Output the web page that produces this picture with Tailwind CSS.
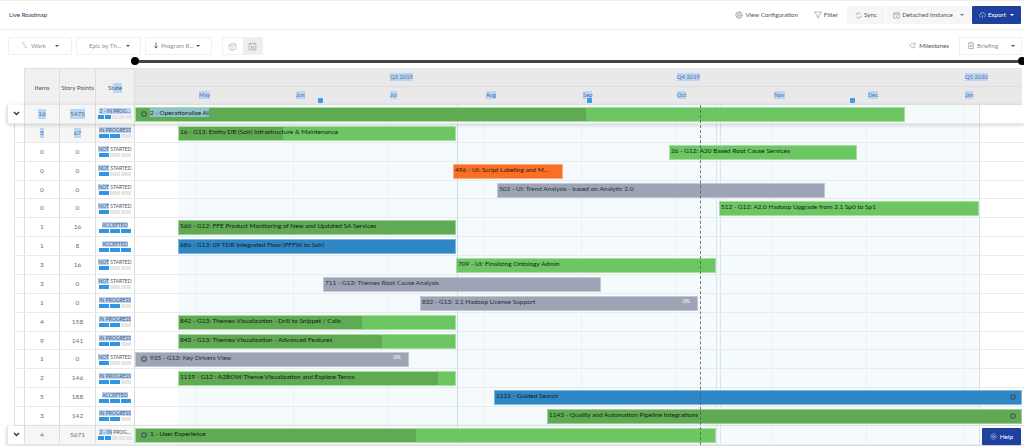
<!DOCTYPE html>
<html lang="en">
<head>
    <meta charset="UTF-8">
    <title>Live Roadmap</title>
    <script src="https://cdn.jsdelivr.net/npm/@tailwindcss/browser@4"></script>
</head>
<body class="bg-white font-[Lato,sans-serif] text-[#4a5568]">
<div class="relative h-[446px] w-[1024px] overflow-hidden">
    <!-- top bar -->
    <header class="flex h-[30px] items-center justify-between border-t border-b border-[#eeeeee] pl-[9px] pr-[3px]">
        <h1 class="text-[6.200px] font-medium text-[#3d4a63]">Live Roadmap</h1>
        <div class="flex items-center whitespace-nowrap text-[6.200px] text-[#4a5568]">
            <span class="mr-[16px] flex items-center gap-[2px]">
                <svg class="h-[8px] w-[8px] text-[#8a8f98]" viewBox="0 0 16 16" fill="none" stroke="currentColor" stroke-width="1.6"><circle cx="8" cy="8" r="2.5"/><circle cx="8" cy="8" r="6" stroke-dasharray="2.2 1.2" stroke-width="2.6"/></svg>
                View Configuration
            </span>
            <span class="mr-[9px] flex items-center gap-[2px]">
                <svg class="h-[8px] w-[8px] text-[#8a8f98]" viewBox="0 0 16 16" fill="none" stroke="currentColor" stroke-width="1.2"><path d="M1 2h14L10 8.5V14l-4-2V8.5z"/></svg>
                Filter
            </span>
            <span class="flex h-[18px] w-[38px] items-center justify-center gap-[2px] rounded-[1px] bg-[#f6f6f6]">
                <svg class="h-[7px] w-[7px] text-[#8a8f98]" viewBox="0 0 16 16" fill="none" stroke="currentColor" stroke-width="1.6"><path d="M2 7a6 6 0 0 1 11-2M14 9a6 6 0 0 1-11 2"/></svg>
                Sync
            </span>
            <span class="ml-px flex h-[18px] w-[85px] items-center justify-center gap-[2px] rounded-[1px] bg-[#f6f6f6]">
                <svg class="h-[7px] w-[7px] text-[#8a8f98]" viewBox="0 0 16 16" fill="none" stroke="currentColor" stroke-width="1.4"><rect x="2" y="2" width="12" height="12"/><path d="M2 5h12M8 8v4"/></svg>
                Detached Instance
                <span class="ml-[5px] h-0 w-0 border-x-[2px] border-t-[2px] border-x-transparent border-t-[#777777]"></span>
            </span>
            <span class="ml-px flex h-[18px] w-[49px] items-center justify-center gap-[2px] rounded-[1px] bg-[#1e419f] text-white">
                <svg class="h-[7px] w-[7px] text-[#b8c6ea]" viewBox="0 0 16 16" fill="none" stroke="currentColor" stroke-width="1.5"><path d="M4 11a3 3 0 0 1 0-6 4 4 0 0 1 8 0 3 3 0 0 1 0 6M8 7v7"/></svg>
                Export
                <span class="ml-[2px] h-0 w-0 border-x-[2px] border-t-[2px] border-x-transparent border-t-white"></span>
            </span>
        </div>
    </header>

    <!-- toolbar -->
    <div class="flex h-[26px] items-center justify-between whitespace-nowrap pl-[8px] pr-[2px] pt-[6px] text-[6.200px] text-[#8b8f96]">
        <div class="flex items-center">
            <span class="flex h-[18px] w-[64px] items-center justify-between border border-[#f0f0f0] pl-[12px] pr-[12px]">
                <span class="flex items-center gap-[3px]">
                    <svg class="h-[7px] w-[7px] text-[#999999]" viewBox="0 0 16 16" fill="none" stroke="currentColor" stroke-width="1.4"><path d="M2 2h6M5 7h6M8 12h6"/></svg>
                    Work
                </span>
                <span class="h-0 w-0 border-x-[2px] border-t-[2px] border-x-transparent border-t-[#555555]"></span>
            </span>
            <span class="ml-[4px] flex h-[18px] w-[65px] items-center justify-between border border-[#f0f0f0] pl-[12px] pr-[10px]">
                Epic by Th...
                <span class="h-0 w-0 border-x-[2px] border-t-[2px] border-x-transparent border-t-[#555555]"></span>
            </span>
            <span class="ml-[4px] flex h-[18px] w-[67px] items-center justify-between border border-[#f0f0f0] pl-[8px] pr-[11px]">
                <span class="flex items-center gap-[3px]">
                    <svg class="h-[7px] w-[4px] text-[#444444]" viewBox="0 0 8 16" fill="none" stroke="currentColor" stroke-width="1.8"><path d="M4 1v12M1 10l3 4 3-4"/></svg>
                    Program R...
                </span>
                <span class="h-0 w-0 border-x-[2px] border-t-[2px] border-x-transparent border-t-[#555555]"></span>
            </span>
            <span class="ml-[10px] flex h-[18px] w-[41px] border border-[#f0f0f0]">
                <span class="flex w-1/2 items-center justify-center">
                    <svg class="h-[9px] w-[9px] text-[#b5b5b5]" viewBox="0 0 16 16" fill="none" stroke="currentColor" stroke-width="1.3"><path d="M2 5l7-3 5 2v8l-7 3-5-3zM2 5l5 2.500 7-3.500M7 7.500V15"/></svg>
                </span>
                <span class="flex w-1/2 items-center justify-center bg-[#eeeeee]">
                    <svg class="h-[9px] w-[9px] text-[#a8a8a8]" viewBox="0 0 16 16" fill="none" stroke="currentColor" stroke-width="1.3"><rect x="2" y="3" width="12" height="11"/><path d="M5 1v4M11 1v4M6 8h4v3H6z"/></svg>
                </span>
            </span>
        </div>
        <div class="flex items-center">
            <span class="mr-[10px] flex items-center gap-[3px] text-[#4a5568]">
                <svg class="h-[7px] w-[7px] text-[#9aa0a8]" viewBox="0 0 16 16" fill="none" stroke="currentColor" stroke-width="1.5"><path d="M1 8l6-5h8l-4 5 2 5H7z"/></svg>
                Milestones
            </span>
            <span class="flex h-[18px] w-[63px] items-center justify-between border border-[#f0f0f0] pl-[8px] pr-[6px]">
                <span class="flex items-center gap-[3px]">
                    <svg class="h-[7px] w-[6px] text-[#999999]" viewBox="0 0 12 16" fill="none" stroke="currentColor" stroke-width="1.6"><rect x="1" y="2" width="10" height="13"/><path d="M4 1h4M3 7h6M3 10h6"/></svg>
                    Briefing
                </span>
                <span class="h-0 w-0 border-x-[2px] border-t-[2px] border-x-transparent border-t-[#555555]"></span>
            </span>
        </div>
    </div>

    <!-- date range slider -->
    <div class="mb-[2px] ml-[131px] flex h-[10px] w-[895px] items-center">
        <span class="h-[8px] w-[8px] shrink-0 rounded-full bg-black"></span>
        <span class="h-[3px] flex-1 bg-[#444444]"></span>
        <span class="h-[8px] w-[8px] shrink-0 rounded-full bg-black"></span>
    </div>

    <!-- column and calendar headers -->
    <div class="ml-[24px] flex h-[37px] whitespace-nowrap text-[6.200px] text-[#4a5568]">
        <div class="flex w-[36px] items-center justify-center border-x border-t border-[#dddddd] bg-[#f0f0f0] pt-[2px]">Items</div>
        <div class="flex w-[36px] items-center justify-center border-r border-t border-[#dddddd] bg-[#f0f0f0] pt-[2px]">Story Points</div>
        <div class="flex w-[39px] items-center justify-center border-r border-t border-[#dddddd] bg-[#f0f0f0] pt-[2px]">St<span class="bg-[#b9d6f8]">ate</span></div>
        <div id="calendar" class="relative w-[887px] bg-[#e9e9e9]">
            <div class="h-[19px] border-b border-[#dddddd]"></div>
        </div>
    </div>

    <!-- rows -->
    <div class="relative">
        <div class="absolute left-[178px] top-0 h-[360px] w-[801px] bg-[#f5fafd]"></div>
        <div id="gridlines" class="absolute inset-0"></div>
        <div id="rows" class="relative"></div>
        <span class="absolute inset-y-0 left-[700px] border-l border-dashed border-[#555b60]/80"></span>
    </div>

    <button class="absolute left-[982px] top-[428px] flex h-[17px] w-[39px] items-center justify-center gap-[3px] rounded-[1px] bg-[#1e419f] text-[6.500px] text-white shadow">
        <svg class="h-[7px] w-[7px] text-[#b8c6ea]" viewBox="0 0 16 16" fill="none" stroke="currentColor" stroke-width="2"><circle cx="8" cy="8" r="6" stroke-dasharray="3 1.500"/><circle cx="8" cy="8" r="2"/></svg>
        Help
    </button>
</div>

<script>
    const months = [['May', 199], ['Jun', 296], ['Jul', 390], ['Aug', 486], ['Sep', 583], ['Oct', 677], ['Nov', 774], ['Dec', 868], ['Jan', 965]];
    const quarters = [['Q3 2019', 390], ['Q4 2019', 677], ['Q1 2020', 965]];
    const milestones = [320, 589, 852];

    const barColors = {
        green: 'bg-[#6cc661]',
        dark: 'bg-[#5faa52]',
        orange: 'bg-[#fb6f24]',
        gray: 'bg-[#9ca4b5]',
        blue: 'bg-[#2f86c5]'
    };

    const stateBars = { 'NOT STARTED': 1, 'IN PROGRESS': 2, 'ACCEPTED': 3 };

    const rows = [
        { items: 16, points: 5475, state: '2 - IN PROG...', group: true, selected: true, from: 135, to: 905, done: 585, color: 'green', title: '2 - Operationalize AI', icon: 'left' },
        { items: 5, points: 67, state: 'IN PROGRESS', selected: true, from: 178, to: 456, done: 282, color: 'green', title: '16 - G13: Entity DB (Solr) Infrastructure & Maintenance' },
        { items: 0, points: 0, state: 'NOT STARTED', from: 669, to: 857, color: 'green', title: '26 - G12: A20 Based Root Cause Services' },
        { items: 0, points: 0, state: 'NOT STARTED', from: 453, to: 563, color: 'orange', title: '496 - UI: Script Labeling and M...' },
        { items: 0, points: 0, state: 'NOT STARTED', from: 497, to: 825, color: 'gray', title: '502 - UI: Trend Analysis - based on Analytic 2.0' },
        { items: 0, points: 0, state: 'NOT STARTED', from: 719, to: 979, color: 'green', title: '512 - G12: A2.0 Hadoop Upgrade from 2.1 Sp0 to Sp1' },
        { items: 1, points: 16, state: 'ACCEPTED', from: 178, to: 456, color: 'dark', title: '560 - G12: FFE Product Monitoring of New and Updated SA Services' },
        { items: 1, points: 8, state: 'ACCEPTED', from: 178, to: 456, color: 'blue', title: '686 - G13: 09 TDR Integrated Flow (PFFW to Solr)' },
        { items: 3, points: 16, state: 'NOT STARTED', from: 456, to: 716, color: 'green', title: '709 - UI: Finalizing Ontology Admin' },
        { items: 3, points: 0, state: 'NOT STARTED', from: 323, to: 601, color: 'gray', title: '711 - G13: Themes Root Cause Analysis' },
        { items: 1, points: 0, state: 'IN PROGRESS', from: 420, to: 698, color: 'gray', title: '832 - G13: 2.1 Hadoop License Support', percent: '0%' },
        { items: 4, points: 158, state: 'IN PROGRESS', from: 178, to: 456, done: 361, color: 'green', title: '842 - G13: Themes Visualization - Drill to Snippet / Calls' },
        { items: 9, points: 141, state: 'IN PROGRESS', from: 178, to: 456, done: 381, color: 'green', title: '843 - G13: Themes Visualization - Advanced Features' },
        { items: 1, points: 0, state: 'NOT STARTED', from: 135, to: 409, color: 'gray', title: '935 - G13: Key Drivers View', percent: '0%', icon: 'left' },
        { items: 2, points: 146, state: 'IN PROGRESS', from: 178, to: 456, done: 437, color: 'green', title: '1119 - G12 : A2BOW Theme Visualization and Explore Terms' },
        { items: 5, points: 188, state: 'ACCEPTED', from: 494, to: 1022, color: 'blue', title: '1121 - Guided Search', icon: 'right' },
        { items: 3, points: 142, state: 'IN PROGRESS', from: 547, to: 1022, color: 'dark', title: '1143 - Quality and Automation Pipeline Integrations', icon: 'right' },
        { items: 4, points: 5671, state: '2 - IN PROG...', group: true, from: 135, to: 716, done: 415, color: 'green', title: '1 - User Experience', icon: 'left' }
    ];

    function clockIcon() {
        return `<svg class="h-[6px] w-[6px] shrink-0 text-[#3f5560]" viewBox="0 0 16 16" fill="none" stroke="currentColor" stroke-width="3"><circle cx="8" cy="8" r="6"/></svg>`;
    }

    function stateCell(row) {
        const filled = row.group ? 2 : stateBars[row.state];
        let label = `<span class="bg-[#b9d6f8]">${row.state}</span>`;
        if (row.state === 'NOT STARTED') label = `<span class="bg-[#b9d6f8]">NOT</span> STARTED`;
        if (row.group && !row.selected) label = `<span class="bg-[#b9d6f8]">2 - IN</span> PROG...`;

        // group rows split the progress into five short steps
        const steps = row.group ? [0, 1, 2, 3, 4] : [0, 1, 2];
        const segments = steps.map(i =>
            `<span class="h-[4px] ${row.group ? 'w-[6px]' : 'w-[10px]'} ${i < filled ? 'bg-[#2f96e6]' : 'bg-[#e6e6e6]'}"></span>`
        ).join('');

        return `
            <div class="flex w-[39px] flex-col items-center justify-center border-r border-[#dddddd] ${row.group || row.selected ? 'bg-[#f6f6f6]' : ''}">
                <span class="whitespace-nowrap text-[5px] leading-[7px] text-[#4a5568]">${label}</span>
                <span class="flex gap-px">${segments}</span>
            </div>`;
    }

    function bar(row) {
        const width = row.to - row.from;
        const doneWidth = row.done ? row.done - row.from : 0;
        const textColor = row.color === 'gray' ? 'text-[#2b3140]' : 'text-[#16201a]';
        return `
            <div class="absolute top-[2px] h-[15px] overflow-hidden border border-white/40 ${barColors[row.color]}" style="left:${row.from - 135}px;width:${width}px">
                ${doneWidth ? `<span class="absolute inset-y-0 left-0 bg-[#5faa52]" style="width:${doneWidth}px"></span>` : ''}
                ${row.icon === 'left' ? `<span class="absolute left-[5px] top-[3px]">${clockIcon()}</span>` : ''}
                <span class="absolute top-0 whitespace-nowrap text-[6.500px] leading-[9px] ${row.icon === 'left' ? 'left-[14px]' : 'left-[1px]'} ${textColor} ${row.selected && row.group ? 'bg-[#8fc3c9]' : ''}">${row.title}</span>
                ${row.percent ? `<span class="absolute right-[7px] top-0 text-[5.500px] leading-[9px] text-white">${row.percent}</span>` : ''}
                ${row.icon === 'right' ? `<span class="absolute right-[5px] top-[3px]">${clockIcon()}</span>` : ''}
            </div>`;
    }

    function rowTemplate(row) {
        const number = value => row.selected ? `<span class="bg-[#b9d6f8]">${value}</span>` : value;
        const cellBg = row.group || row.selected ? 'bg-[#f6f6f6]' : '';
        return `
            <div class="flex h-[18.880px] border-b border-[#e8eaec] ${row.group ? 'relative ml-[7px] shadow-[0_1px_4px_rgba(0,0,0,0.18)]' : 'ml-[14px]'}">
                <div class="flex items-center justify-center border-l ${row.group ? 'w-[17px] border-[#e5e5e5] bg-white' : 'w-[10px] border-[#dddddd]'}">
                    ${row.group ? `<svg class="h-[5px] w-[7px] text-[#333c48]" viewBox="0 0 14 10" fill="none" stroke="currentColor" stroke-width="3"><path d="M2 2l5 5 5-5"/></svg>` : ''}
                </div>
                <div class="flex w-[36px] items-center justify-center border-x border-[#dddddd] text-[6.500px] text-[#666e78] ${cellBg}">${number(row.items)}</div>
                <div class="flex w-[36px] items-center justify-center border-r border-[#dddddd] text-[6.500px] text-[#666e78] ${cellBg}">${number(row.points)}</div>
                ${stateCell(row)}
                <div class="relative w-[887px]">${bar(row)}</div>
            </div>`;
    }

    document.getElementById('rows').innerHTML = rows.map(rowTemplate).join('');

    document.getElementById('calendar').insertAdjacentHTML('beforeend',
        quarters.map(([name, x]) => `<span class="absolute top-[5px] bg-[#b9d6f8] text-[5.800px] leading-[8px] text-[#5c7089]" style="left:${x - 135}px">${name}</span>`).join('') +
        months.map(([name, x]) => `<span class="absolute top-[23px] bg-[#b9d6f8] text-[5.800px] leading-[8px] text-[#5c7089]" style="left:${x - 135}px">${name}</span>`).join('') +
        milestones.map(x => `<span class="absolute top-[30px] h-[5px] w-[5px] rounded-[1px] bg-[#3b9bf0]" style="left:${x - 137}px"></span>`).join('')
    );

    // month lines and the end of the planned range
    const lines = [196, 293, 387, 484, 581, 675, 772, 866, 964];
    document.getElementById('gridlines').innerHTML =
        lines.map(x => `<span class="absolute inset-y-0 w-px bg-[#e9eef2]/70" style="left:${x}px"></span>`).join('') +
        `<span class="absolute inset-y-0 left-[457px] w-px bg-[#c4dbe9]"></span>
         <span class="absolute inset-y-0 left-[716px] w-px bg-[#d5e6f1]"></span>
         <span class="absolute inset-y-0 left-[720px] w-px bg-[#d5e6f1]"></span>
         <span class="absolute inset-y-0 left-[979px] w-px bg-[#d8e0e8]"></span>`;
</script>
</body>
</html>
